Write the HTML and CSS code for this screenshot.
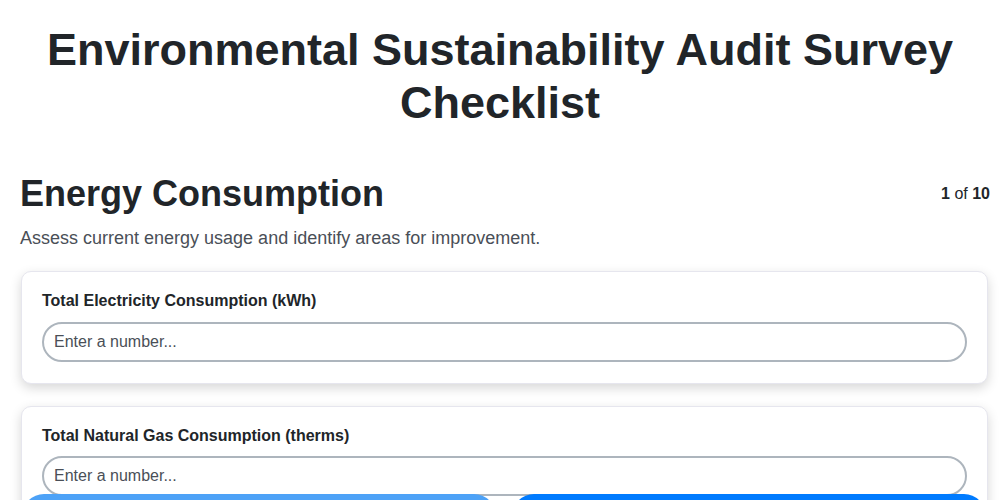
FILE: index.html
```html
<!DOCTYPE html>
<html lang="en">

<head>
    <meta charset="UTF-8">
    <meta name="viewport" content="width=device-width, initial-scale=1.0">
    <title>Environmental Sustainability Audit Survey Checklist</title>
    <link rel="stylesheet" href="styles.css">
</head>

<body>
    <div class="survey">
        <h1 class="survey-title">Environmental Sustainability Audit Survey Checklist</h1>

        <div class="section-head">
            <h2>Energy Consumption</h2>
            <div class="progress"><b>1</b> of <b>10</b></div>
        </div>
        <p class="section-desc">Assess current energy usage and identify areas for improvement.</p>

        <div class="questions">
            <div class="question-card">
                <label for="q1">Total Electricity Consumption (kWh)</label>
                <input id="q1" type="number" placeholder="Enter a number...">
            </div>
            <div class="question-card">
                <label for="q2">Total Natural Gas Consumption (therms)</label>
                <input id="q2" type="number" placeholder="Enter a number...">
            </div>
        </div>

        <div class="nav-buttons">
            <button class="btn btn-prev" disabled>Previous</button>
            <button class="btn btn-next">Next</button>
        </div>
    </div>
</body>

</html>
```

FILE: styles.css
```css
body {
    margin: 0;
    font-family: "Liberation Sans", Arial, sans-serif;
    color: #212529;
    background: #fff;
}

.survey {
    padding: 23px 10px 0 20px;
}

.survey-title {
    margin: 0 10px 0 0;
    font-size: 45px;
    line-height: 1.18;
    text-align: center;
}

/* tiêu đề phần + số trang */
.section-head {
    display: flex;
    justify-content: space-between;
    align-items: center;
    margin-top: 43px;
}

.section-head h2 {
    margin: 0;
    font-size: 36px;
    line-height: 1.2;
}

.progress {
    font-size: 16px;
}

.section-desc {
    margin: 10px 0 19px;
    font-size: 18px;
    line-height: 1.5;
    color: #4a4f57;
}

.questions {
    height: 223px;
}

.question-card {
    margin: 0 2px 22px 1px;
    padding: 19px 20px 21px;
    background: #fff;
    border: 1px solid #e6e6ee;
    border-radius: 10px;
    box-shadow: 0 4px 12px rgba(0, 0, 0, 0.16);
}

.question-card label {
    display: block;
    font-size: 16px;
    font-weight: bold;
    line-height: 1.2;
    margin-bottom: 11px;
}

.question-card input {
    display: block;
    box-sizing: border-box;
    width: 100%;
    height: 40px;
    padding: 0 10px;
    font-family: inherit;
    font-size: 16px;
    border: 2px solid #adb5bd;
    border-radius: 20px;
    outline: none;
}

.question-card input::placeholder {
    color: #4a4f57;
}

.nav-buttons {
    display: flex;
    gap: 16px;
    margin: 0 4px 0 2px;
}

.btn {
    flex: 1;
    height: 44px;
    border: none;
    border-radius: 22px;
    color: #fff;
    font-size: 16px;
    font-family: inherit;
    background-color: #007bff;
    cursor: pointer;
}

.btn-prev {
    background-color: #4da2f7;
}
```
